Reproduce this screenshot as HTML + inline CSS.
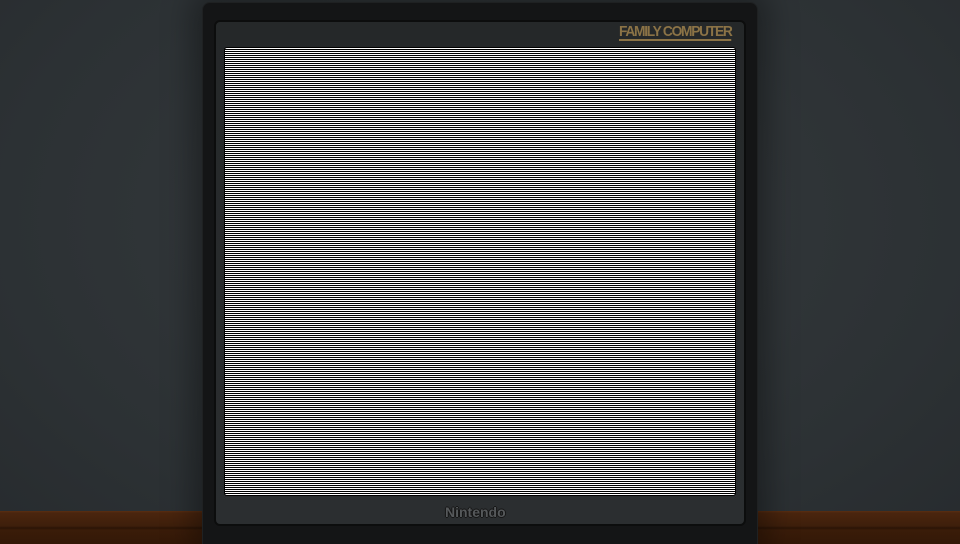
<!DOCTYPE html>
<html><head><meta charset="utf-8"><style>
html,body{margin:0;padding:0;width:960px;height:544px;overflow:hidden}
body{position:relative;background:radial-gradient(ellipse at 50% 40%,#363b3e 0%,#2c3134 70%,#272b2e 100%);font-family:"Liberation Sans",sans-serif}
.wood{position:absolute;left:0;right:0;top:511px;height:33px;background:linear-gradient(#5a2e12 0,#4a250e 2px,#3e1f0b 15px,#2a1406 17px,#3a1c09 19px,#331807 33px)}
.frame{position:absolute;left:202px;top:2px;width:556px;height:550px;background:#141516;border-radius:8px;box-shadow:0 0 30px 10px rgba(0,0,0,.35);border:1px solid #1f2122;box-sizing:border-box}
.bezel{position:absolute;left:11px;top:17px;width:532px;height:506px;background:linear-gradient(#252829,#2b2e30);border:2px solid #0c0d0d;border-radius:6px;box-sizing:border-box}
.screen{position:absolute;left:224px;top:47px;width:512px;height:449px;background:repeating-linear-gradient(#fff 0,#fff 1px,#000 1px,#000 2px);border:1px solid #000;box-sizing:border-box;border-radius:3px}
.fc{position:absolute;left:619px;top:24px;font-size:15px;font-weight:bold;color:#8b7346;letter-spacing:-1.4px;border-bottom:2px solid #8b7346;line-height:15px;transform:scaleX(0.92);transform-origin:left}
.nin{position:absolute;left:445px;top:504px;font-size:14px;font-weight:bold;color:#55585a;text-shadow:-1px 0 0 #151515,1px 0 0 #151515,0 -1px 0 #151515,0 1px 0 #151515}
</style></head><body>
<div class="wood"></div>
<div class="frame"><div class="bezel"></div></div>
<div class="screen"></div>
<div class="fc">FAMILY COMPUTER</div>
<div class="nin">Nintendo</div>
</body></html>
